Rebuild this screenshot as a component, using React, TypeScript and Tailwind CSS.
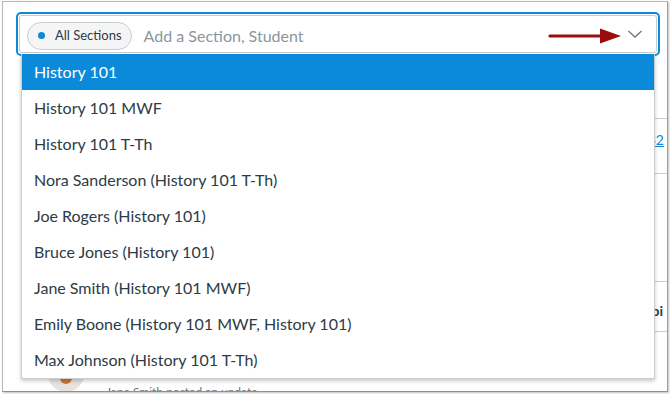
import React from "react";

const items = [
  "History 101",
  "History 101 MWF",
  "History 101 T-Th",
  "Nora Sanderson (History 101 T-Th)",
  "Joe Rogers (History 101)",
  "Bruce Jones (History 101)",
  "Jane Smith (History 101 MWF)",
  "Emily Boone (History 101 MWF, History 101)",
  "Max Johnson (History 101 T-Th)",
];

export default function App() {
  return (
    <div className="w-[670px] h-[394px] bg-white overflow-hidden font-['Lato','Liberation_Sans',sans-serif]">
      <div className="ml-[2px] mt-px w-[666px] h-[391px] border border-[#b8b8b8] border-b-[#8f8f8f] border-r-[#9c9c9c] shadow-[1px_1px_2px_rgba(0,0,0,0.25)] relative overflow-hidden bg-white">
        {/* input */}
        <div className="pt-[10px] pl-[13px]">
          <div className="w-[644px] border-2 border-[#0b8ad9] rounded-[5px] p-px">
            <div className="h-[38px] border border-[#c7cdd1] rounded-[3px] bg-white flex items-center pl-[7px] pr-[13px] pt-[3px]">
              <div className="h-[28px] rounded-full border border-[#c7cdd1] bg-[#f5f5f5] flex items-center pl-[10px] pr-[9px] gap-[10px]">
                <span className="w-[7px] h-[7px] rounded-full bg-[#0b8ad9]" />
                <span className="text-[13px] text-[#2d3b45] leading-none">All Sections</span>
              </div>
              <span className="ml-[12px] text-[16px] text-[#8b969e] leading-none">Add a Section, Student</span>
              <div className="flex-1" />
              <svg width="74" height="18" viewBox="0 0 74 18" className="block">
                <line x1="2" y1="9" x2="56" y2="9" stroke="#9b0c0c" strokeWidth="3.2" strokeLinecap="round" />
                <polygon points="52,1.5 73,9 52,16.5" fill="#9b0c0c" />
              </svg>
              <svg width="16" height="10" viewBox="0 0 16 10" className="block ml-[5px] mb-[3px]">
                <polyline points="1.5,2 8,8 14.5,2" fill="none" stroke="#6b7780" strokeWidth="1.3" />
              </svg>
            </div>
          </div>
        </div>

        {/* underlying page */}
        <div className="mt-[62px] flex flex-col">
          <div className="ml-[600px] h-[55px] border-t border-[#c7cdd1] flex items-center justify-end pr-[3px] pb-[14px]">
            <span className="text-[14px] text-[#0b8ad9] underline">32</span>
          </div>
          <div className="ml-[600px] h-[108px] border-t border-[#c7cdd1]" />
          <div className="ml-[600px] h-[50px] border-t border-[#c7cdd1] flex items-center justify-end pr-[4px] pt-[8px]">
            <span className="text-[14px] font-bold text-[#2d3b45]">pi</span>
          </div>
          <div className="ml-[600px] h-px bg-[#c7cdd1]" />
          <div className="h-[60px] flex items-start pl-[45px] pt-[24px] gap-[22px]">
            <div className="w-[36px] h-[36px] rounded-full bg-[#e6e3e0] flex items-center justify-center">
              <div className="w-[12px] h-[14px] rounded-full bg-[#d0763a] mt-[6px]" />
            </div>
            <span className="text-[12px] leading-[14px] text-[#6b7780] mt-[29px]">Jane Smith posted an update</span>
          </div>
        </div>

        {/* dropdown */}
        <div className="absolute left-[18px] top-[52px] w-[634px] border border-t-0 border-[#c7cdd1] bg-white shadow-[0_2px_4px_rgba(0,0,0,0.22)]">
          {items.map((t, i) => (
            <div
              key={t}
              className={
                i === 0
                  ? "h-[36px] flex items-center pl-[12px] text-[16px] bg-[#0b8ad9] text-white"
                  : "h-[36px] flex items-center pl-[12px] text-[16px] text-[#2d3b45]"
              }
            >
              {t}
            </div>
          ))}
        </div>
      </div>
    </div>
  );
}
